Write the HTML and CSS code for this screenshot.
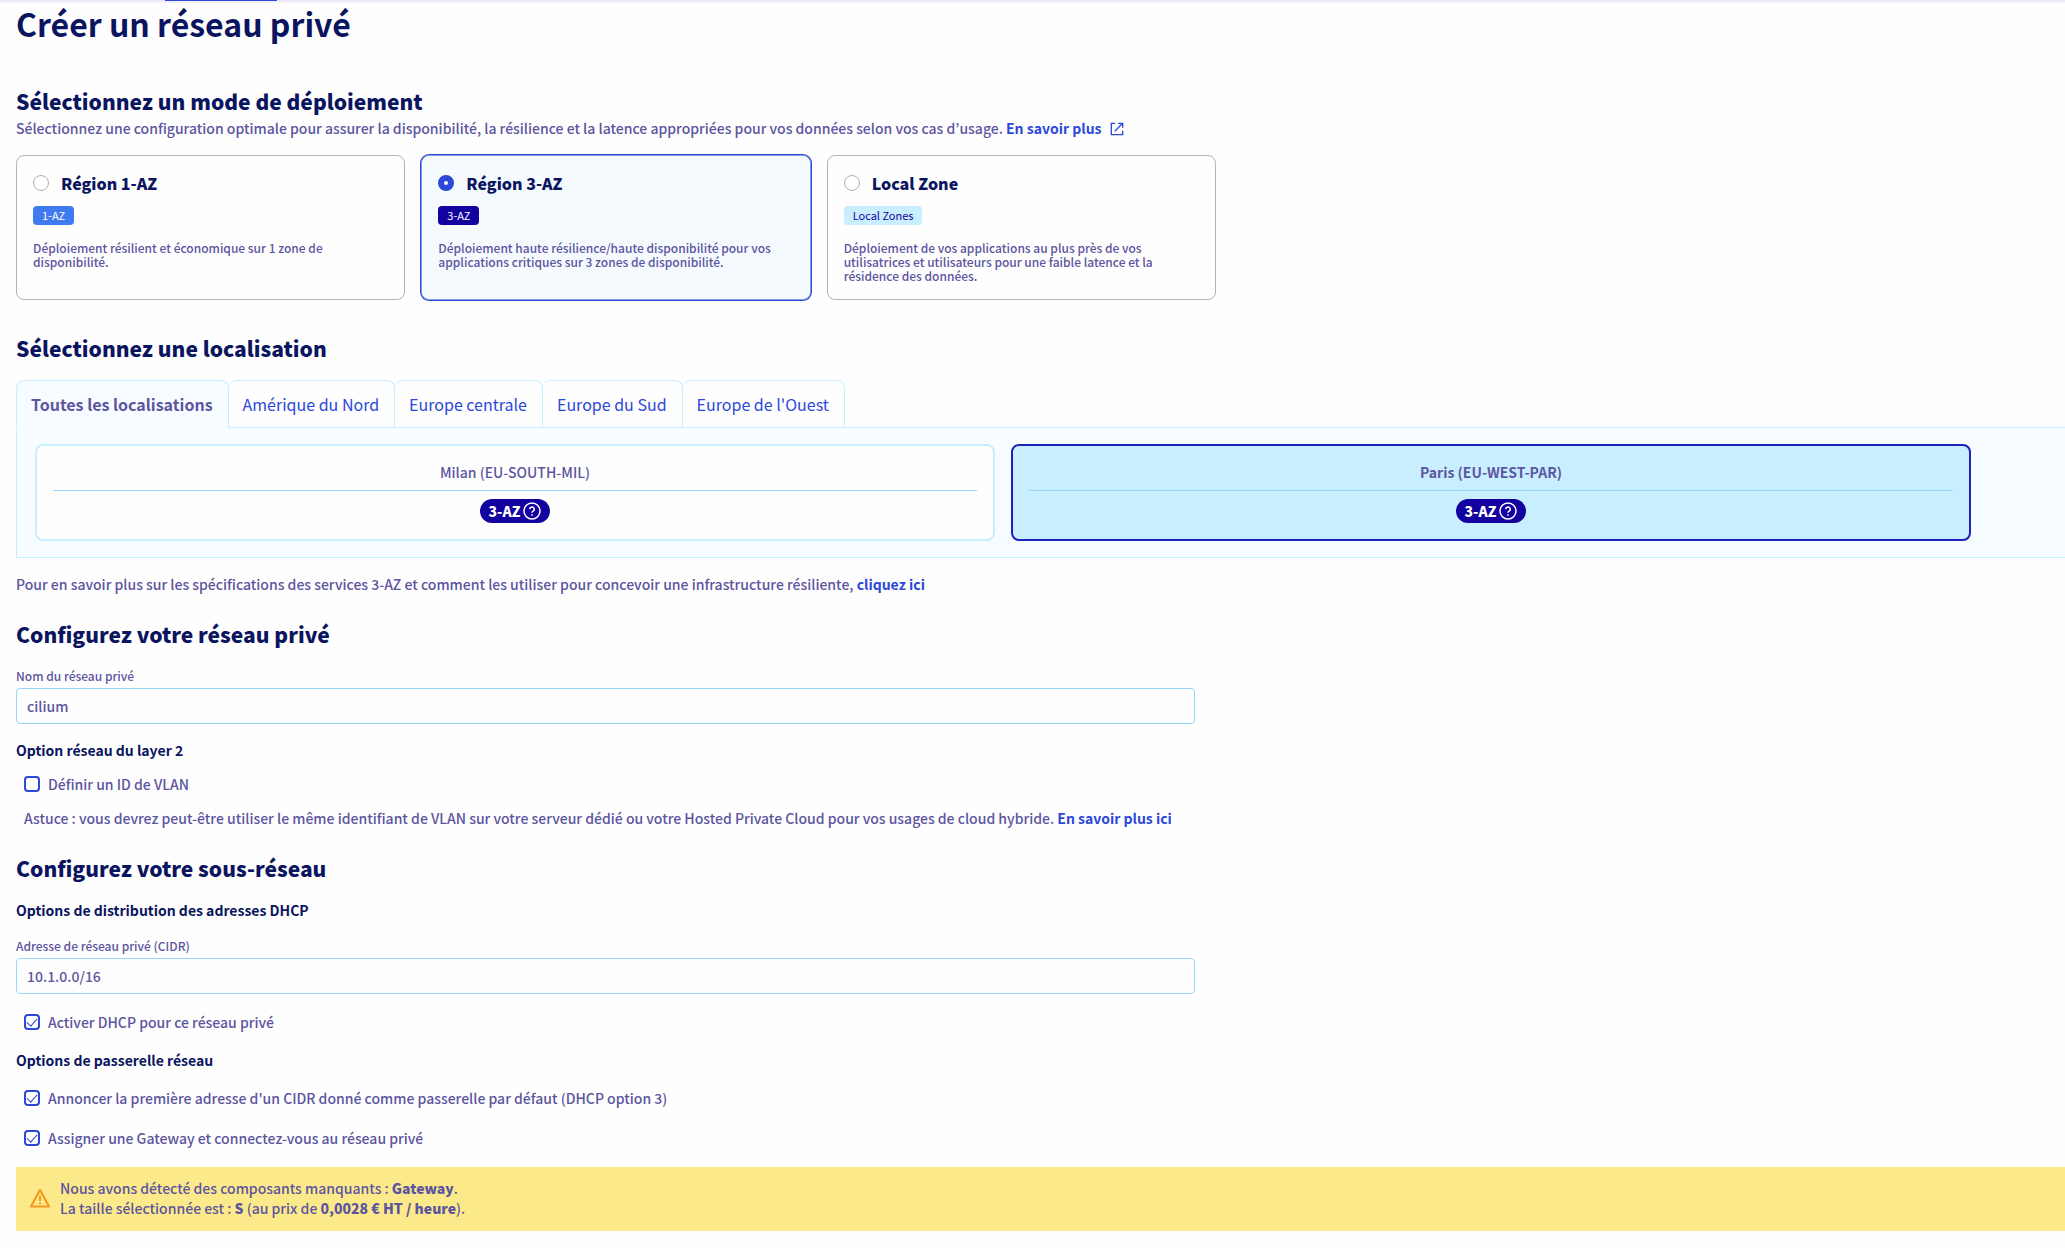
FILE: index.html
```html
<!DOCTYPE html>
<html lang="fr">
<head>
<meta charset="utf-8">
<meta name="viewport" content="width=device-width, initial-scale=1">
<title>Créer un réseau privé</title>
<link rel="stylesheet" href="styles.css">
</head>
<body>
<div class="topbar"><span class="topbar-active"></span></div>
<main class="page">
  <h1 class="title">Créer un réseau privé</h1>

  <section>
    <h2 class="heading">Sélectionnez un mode de déploiement</h2>
    <p class="text">Sélectionnez une configuration optimale pour assurer la disponibilité, la résilience et la latence appropriées pour vos données selon vos cas d’usage. <a class="link" href="#">En savoir plus <svg class="external" viewBox="0 0 16 16" aria-hidden="true"><path d="M6 1.5H1.5v13h13V10M9.5 1.5h5v5M14.500 1.500 5.500 10.500"/></svg></a></p>
    <div class="modes">
      <label class="mode">
        <span class="mode-head"><input class="radio" type="radio" name="mode"><span class="mode-title">Région 1-AZ</span></span>
        <span class="badge badge-blue">1-AZ</span>
        <span class="mode-text">Déploiement résilient et économique sur 1 zone de disponibilité.</span>
      </label>
      <label class="mode mode-selected">
        <span class="mode-head"><input class="radio" type="radio" name="mode" checked><span class="mode-title">Région 3-AZ</span></span>
        <span class="badge badge-navy">3-AZ</span>
        <span class="mode-text">Déploiement haute résilience/haute disponibilité pour vos applications critiques sur 3 zones de disponibilité.</span>
      </label>
      <label class="mode">
        <span class="mode-head"><input class="radio" type="radio" name="mode"><span class="mode-title">Local Zone</span></span>
        <span class="badge badge-sky">Local Zones</span>
        <span class="mode-text">Déploiement de vos applications au plus près de vos utilisatrices et utilisateurs pour une faible latence et la résidence des données.</span>
      </label>
    </div>
  </section>

  <section class="section-location">
    <h2 class="heading">Sélectionnez une localisation</h2>
    <div class="tabs" role="tablist">
      <button class="tab tab-active" type="button" role="tab" aria-selected="true">Toutes les localisations</button>
      <button class="tab" type="button" role="tab">Amérique du Nord</button>
      <button class="tab" type="button" role="tab">Europe centrale</button>
      <button class="tab" type="button" role="tab">Europe du Sud</button>
      <button class="tab" type="button" role="tab">Europe de l'Ouest</button>
    </div>
    <div class="panel">
      <button class="place" type="button">
        <span class="place-name">Milan (EU-SOUTH-MIL)</span>
        <span class="pill">3-AZ<svg class="help" viewBox="0 0 18 18" aria-hidden="true"><circle cx="9" cy="9" r="8"/><path d="M6.800 7.200a2.200 2.200 0 1 1 3.300 1.900c-.8.500-1.100.8-1.100 1.700M9 12.300v1.400"/></svg></span>
      </button>
      <button class="place place-selected" type="button">
        <span class="place-name">Paris (EU-WEST-PAR)</span>
        <span class="pill">3-AZ<svg class="help" viewBox="0 0 18 18" aria-hidden="true"><circle cx="9" cy="9" r="8"/><path d="M6.800 7.200a2.200 2.200 0 1 1 3.300 1.900c-.8.500-1.100.8-1.100 1.700M9 12.300v1.400"/></svg></span>
      </button>
    </div>
    <p class="text text-more">Pour en savoir plus sur les spécifications des services 3-AZ et comment les utiliser pour concevoir une infrastructure résiliente, <a class="link" href="#">cliquez ici</a></p>
  </section>

  <section class="section">
    <h2 class="heading">Configurez votre réseau privé</h2>
    <div class="field">
      <label class="label" for="network-name">Nom du réseau privé</label>
      <input class="input" id="network-name" type="text" value="cilium">
    </div>
    <h3 class="subheading">Option réseau du layer 2</h3>
    <label class="check check-vlan"><input class="checkbox" type="checkbox">Définir un ID de VLAN</label>
    <p class="text tip">Astuce : vous devrez peut-être utiliser le même identifiant de VLAN sur votre serveur dédié ou votre Hosted Private Cloud pour vos usages de cloud hybride. <a class="link" href="#">En savoir plus ici</a></p>
  </section>

  <section class="section">
    <h2 class="heading">Configurez votre sous-réseau</h2>
    <h3 class="subheading subheading-first">Options de distribution des adresses DHCP</h3>
    <div class="field">
      <label class="label" for="cidr">Adresse de réseau privé (CIDR)</label>
      <input class="input" id="cidr" type="text" value="10.1.0.0/16">
    </div>
    <label class="check"><input class="checkbox" type="checkbox" checked>Activer DHCP pour ce réseau privé</label>
    <h3 class="subheading">Options de passerelle réseau</h3>
    <label class="check check-gateway"><input class="checkbox" type="checkbox" checked>Annoncer la première adresse d'un CIDR donné comme passerelle par défaut (DHCP option 3)</label>
    <label class="check"><input class="checkbox" type="checkbox" checked>Assigner une Gateway et connectez-vous au réseau privé</label>
    <div class="alert" role="alert">
      <svg class="warning" viewBox="0 0 20 20" aria-hidden="true"><path d="M10 2 19 18.500H1Z"/><path d="M10 7.500v5.500M10 14.500v1.800"/></svg>
      <p class="alert-text">Nous avons détecté des composants manquants : <strong>Gateway</strong>.<br>La taille sélectionnée est : <strong>S</strong> (au prix de <strong>0,0028 € HT / heure</strong>).</p>
    </div>
  </section>
</main>
</body>
</html>
```
FILE: styles.css
```css
:root {
  --text: #5c559f;
  --heading: #0b155f;
  --link: #2b48d9;
  --navy: #1402a0;
  --sky: #c8eeff;
  --line: #96d8fa;
  --pale: #f6fcff;
}

* {
  box-sizing: border-box;
}

body {
  margin: 0;
  background: #fefefe;
  color: var(--text);
  font-family: "Noto Sans CJK JP", "Noto Sans", sans-serif;
  font-size: 14px;
  font-weight: 500;
  line-height: 24px;
}

button,
input {
  font: inherit;
  color: inherit;
}

h1,
h2,
h3,
p {
  margin: 0;
}

.topbar {
  display: flex;
  height: 3px;
  padding-left: 165px;
  background: linear-gradient(#e9e6fa, #f6f4fd);
}

.topbar-active {
  width: 112px;
  height: 1px;
  background: var(--link);
}

.page {
  padding: 0 0 16px 16px;
}

.title {
  margin-bottom: 43px;
  color: var(--heading);
  font-size: 32px;
  font-weight: 700;
  line-height: 40px;
}

.heading {
  color: var(--heading);
  font-size: 21px;
  font-weight: 900;
  line-height: 30px;
}

.link {
  color: var(--link);
  font-weight: 700;
  text-decoration: none;
}

.external {
  width: 14px;
  height: 14px;
  margin-left: 5px;
  vertical-align: -2px;
  fill: none;
  stroke: currentColor;
  stroke-width: 1.5;
}

.modes {
  display: grid;
  grid-template-columns: repeat(3, 1fr);
  gap: 16px;
  max-width: 1200px;
  margin-top: 15px;
}

.mode {
  display: flex;
  flex-direction: column;
  align-items: flex-start;
  padding: 16px;
  border: 1px solid #b3b3b8;
  border-radius: 8px;
}

.mode-selected {
  border-color: #8d9bdc;
  background: #f5faff;
  box-shadow: 0 0 0 1px var(--link);
}

.mode-head {
  display: flex;
  align-items: center;
  gap: 12px;
  height: 22px;
}

.radio {
  appearance: none;
  width: 16px;
  height: 16px;
  margin: 0;
  border: 1px solid #aeaeb4;
  border-radius: 50%;
  background: #fff;
}

.radio:checked {
  border: 6px solid var(--link);
}

.mode-title {
  color: var(--heading);
  font-size: 16px;
  font-weight: 900;
  line-height: 20px;
}

.badge {
  margin-top: 12px;
  padding: 0 9px;
  border-radius: 4px;
  color: #fff;
  font-size: 11px;
  font-weight: 400;
  line-height: 19px;
}

.badge-blue {
  background: #3f7bee;
}

.badge-navy {
  background: var(--navy);
}

.badge-sky {
  background: var(--sky);
  color: var(--navy);
}

.mode-text {
  margin-top: 16px;
  font-size: 12px;
  line-height: 14px;
}

.section-location {
  margin-top: 33px;
}

/* keeps the tab strip over the panel's top border */
.tabs {
  position: relative;
  display: flex;
  margin-top: 17px;
}

.tab {
  height: 48px;
  padding: 0 15px 0 14px;
  border: 1px solid var(--sky);
  border-left-width: 0;
  border-radius: 8px 8px 0 0;
  background: #fefefe;
  color: var(--link);
  font-size: 16px;
  font-weight: 400;
}

.tab-active {
  border-bottom-color: var(--pale);
  border-left-width: 1px;
  background: var(--pale);
  color: var(--text);
  font-weight: 700;
}

.panel {
  display: grid;
  grid-template-columns: repeat(2, 1fr);
  gap: 16px;
  margin-top: -1px;
  padding: 16px 94px 16px 18px;
  border: 1px solid var(--sky);
  border-right: 0;
  background: var(--pale);
}

.place {
  display: flex;
  flex-direction: column;
  align-items: center;
  padding: 14px 16px 16px;
  border: 2px solid var(--sky);
  border-radius: 8px;
  background: #fefefe;
}

.place-selected {
  border-color: #1e22bd;
  background: var(--sky);
  font-weight: 700;
}

.place-name {
  width: 100%;
  padding-bottom: 6px;
  border-bottom: 1px solid var(--line);
}

.pill {
  display: flex;
  align-items: center;
  gap: 3px;
  height: 24px;
  margin-top: 8px;
  padding: 0 9px;
  border-radius: 12px;
  background: var(--navy);
  color: #fff;
  font-weight: 900;
}

.help {
  width: 18px;
  height: 18px;
  fill: none;
  stroke: currentColor;
  stroke-width: 1.5;
}

.text-more {
  margin-top: 14px;
}

.section {
  margin-top: 23px;
}

.field {
  display: flex;
  flex-direction: column;
  gap: 2px;
  max-width: 1179px;
  margin-top: 17px;
}

.label {
  font-size: 12px;
  line-height: 20px;
}

.input {
  height: 36px;
  padding: 0 10px;
  border: 1px solid var(--line);
  border-radius: 4px;
  background: #fefefe;
}

.subheading {
  margin-top: 14px;
  color: var(--heading);
  font-size: 14px;
  line-height: 24px;
}

.subheading-first {
  margin-top: 15px;
}

.subheading-first + .field {
  margin-top: 14px;
}

.check {
  display: flex;
  align-items: center;
  gap: 8px;
  margin: 16px 0 0 8px;
}

.check-vlan {
  margin-top: 10px;
}

.check-gateway {
  margin-top: 14px;
}

.checkbox {
  appearance: none;
  display: grid;
  place-items: center;
  width: 16px;
  height: 16px;
  margin: 0;
  border: 2px solid var(--link);
  border-radius: 4px;
}

.checkbox:checked::before {
  content: "";
  width: 9px;
  height: 5px;
  border: solid var(--link);
  border-width: 0 0 1px 1px;
  transform: translateY(-1px) rotate(-48deg);
}

.tip {
  margin: 10px 0 0 8px;
}

.alert {
  display: flex;
  align-items: center;
  gap: 10px;
  margin-top: 17px;
  padding: 11px 14px 13px;
  background: #fce98a;
}

.alert-text {
  line-height: 20px;
}

.alert-text strong {
  font-weight: 900;
}

.warning {
  width: 20px;
  height: 20px;
  fill: none;
  stroke: #f5961d;
  stroke-width: 2;
  stroke-linejoin: round;
}
```
